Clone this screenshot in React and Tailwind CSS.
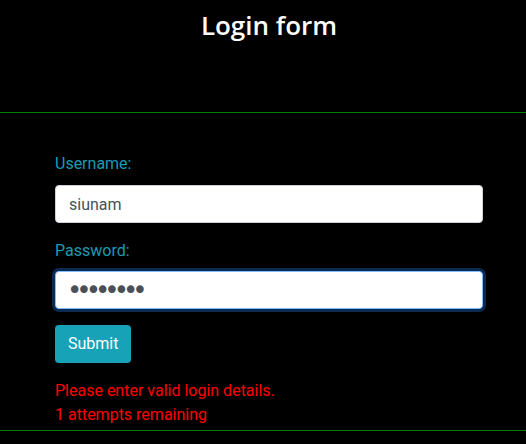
import React, { useState } from "react";

const App = () => {
  const [username, setUsername] = useState("siunam");
  const [password, setPassword] = useState("password");

  return (
    <main className="min-h-screen w-full bg-black font-['Roboto',sans-serif]">
      {/* Header */}
      <div className="h-[113px] w-full border-b border-[#008000] pt-[5px] pl-[12px]">
        <h2 className="text-center text-[26px] leading-[40px] font-semibold text-white font-['Open_Sans',sans-serif]">
          Login form
        </h2>
      </div>

      <form
        className="pl-[55px] pr-[43px] pt-[38px] pb-[3px] border-b border-[#008000]"
        onSubmit={(e) => e.preventDefault()}
      >
        {/* Username */}
        <div className="mb-[15px]">
          <label className="block pt-[1px] text-base leading-6 text-[#1a9bb3] mb-[9px]">
            Username:
          </label>
          <input
            type="text"
            value={username}
            onChange={(e) => setUsername(e.target.value)}
            className="block w-full h-[38px] px-[13px] rounded-[4px] border border-[#ced4da] bg-white text-base text-[#495057] outline-none"
          />
        </div>

        {/* Password */}
        <div className="mb-[16px]">
          <label className="block pt-[1px] text-base leading-6 text-[#1a9bb3] mb-[8px]">
            Password:
          </label>
          <input
            type="password"
            value={password}
            onChange={(e) => setPassword(e.target.value)}
            className="block w-full h-[38px] pl-[11px] pr-[13px] rounded-[4px] border border-[#80bdff] bg-white text-[26px] leading-none tracking-[-6px] text-[#495057] outline-none shadow-[0_0_0_3px_#0a2a52] font-['DejaVu_Sans',sans-serif]"
          />
        </div>

        <button
          type="submit"
          className="h-[38px] px-[13px] rounded-[4px] bg-[#17a2b8] text-base text-white"
        >
          Submit
        </button>

        <div className="mt-[16px] text-base leading-6 text-[#ff0000]">
          <p>Please enter valid login details.</p>
          <p>1 attempts remaining</p>
        </div>
      </form>
    </main>
  );
};

export default App;
